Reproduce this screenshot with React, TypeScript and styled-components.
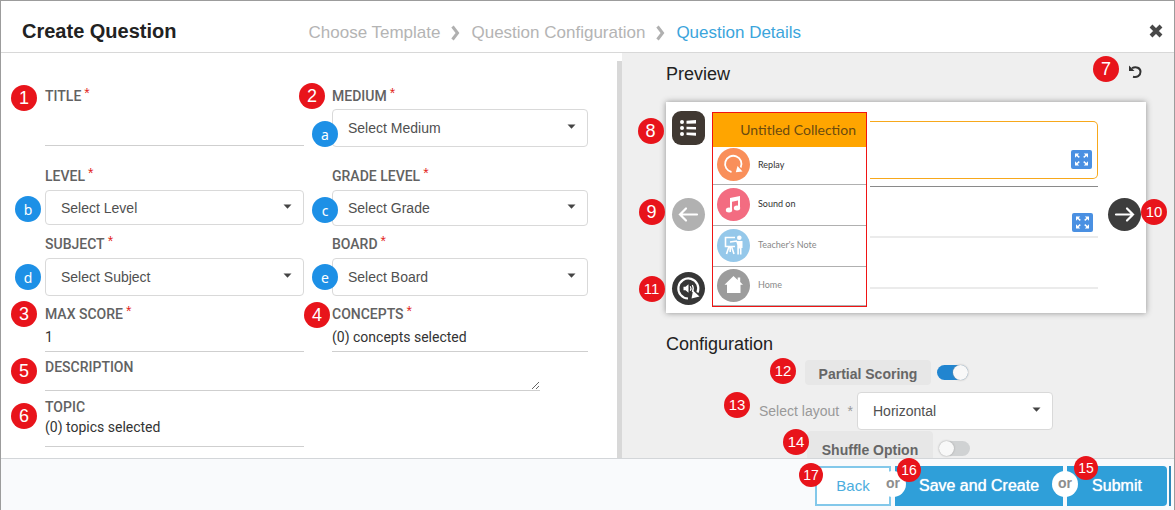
import React from "react";
import styled, { createGlobalStyle, css } from "styled-components";

const sans = `"Liberation Sans", Arial, sans-serif`;
const roboto = `Roboto, "Liberation Sans", sans-serif`;
const lato = `Lato, "Liberation Sans", sans-serif`;

const Global = createGlobalStyle`
  *, *::before, *::after { box-sizing: border-box; }
  body { margin: 0; font-family: ${sans}; background: #fff; }
  button, input, select, textarea { font: inherit; color: inherit; margin: 0; }
`;

/* ---------- shell ---------- */

const Frame = styled.div`
  height: 100vh;
  display: flex;
  flex-direction: column;
  border: 1px solid #9c9c9c;
  border-bottom: 0;
  overflow: hidden;
`;

const Header = styled.header`
  flex: none;
  display: flex;
  align-items: center;
  height: 52px;
  padding: 8px 11px 0 21px;
  border-bottom: 1px solid #d8d8d8;
`;

const Title = styled.h1`
  margin: 0;
  font-size: 20px;
  line-height: 24px;
  font-weight: 700;
  color: #222;
`;

const Crumbs = styled.ol`
  flex: 1;
  display: flex;
  align-items: center;
  margin: 0 0 0 132px;
  padding: 4px 0 0;
  list-style: none;
  font-size: 17px;
  line-height: 24px;
  color: #b4b4b4;
`;

const Crumb = styled.li<{ $active?: boolean }>`
  display: flex;
  align-items: center;
  white-space: nowrap;
  color: ${(p) => (p.$active ? "#3ba5dc" : "inherit")};
  svg { margin: 0 11px; }
`;

const IconButton = styled.button`
  display: flex;
  padding: 0;
  border: 0;
  background: none;
  color: #484848;
`;

const Body = styled.main`
  flex: 1;
  min-height: 0;
  display: grid;
  grid-template-columns: 621fr 552fr;
`;

/* ---------- callouts ---------- */

const Callout = styled.span<{ $x: number; $y: number; $kind?: "letter" | "wide" | "small" }>`
  position: absolute;
  z-index: 2;
  left: ${(p) => p.$x}px;
  top: ${(p) => p.$y}px;
  width: 26px;
  height: 26px;
  border-radius: 50%;
  background: #e8141b;
  color: #fff;
  font: 400 18px/26px ${sans};
  text-align: center;
  ${(p) => p.$kind === "letter" && css`
    background: #1d90e6;
    font: 400 14px/27px "Noto Sans", sans-serif;
  `}
  ${(p) => p.$kind === "wide" && css`font-size: 15px;`}
  ${(p) => p.$kind === "small" && css`
    width: 24px;
    height: 24px;
    font-size: 14px;
    line-height: 24px;
  `}
`;

/* ---------- form ---------- */

const FormPane = styled.form`
  min-height: 0;
  overflow: hidden;
  display: flex;
  padding-top: 8px;
`;

const Fields = styled.div`
  flex: 1;
  display: grid;
  align-content: start;
  grid-template-columns: minmax(0, 259fr) minmax(0, 256fr);
  column-gap: 28px;
  row-gap: 8px;
  padding: 25px 29px 0 44px;
`;

const ScrollTrack = styled.div`
  width: 5px;
  background: #d8d8d8;
`;

const Field = styled.div<{ $first?: boolean; $wide?: boolean; $tight?: boolean }>`
  position: relative;
  display: flex;
  flex-direction: column;
  gap: ${(p) => (p.$tight ? 0 : p.$first ? 3 : 4)}px;
  margin-bottom: ${(p) => (p.$first ? 11 : 0)}px;
  ${(p) => p.$wide && css`
    grid-column: 1 / -1;
    margin: -3px 48px -2px 0;
  `}
`;

const Label = styled.label`
  display: flex;
  gap: 3px;
  font: 500 14px/20px ${roboto};
  color: #626262;
  white-space: nowrap;
`;

const Star = styled.span`
  font: 400 14px/14px ${sans};
  color: #e2231a;
`;

const Control = styled.div`
  position: relative;
`;

const Select = styled.select<{ $height?: number }>`
  display: block;
  appearance: none;
  width: 100%;
  height: ${(p) => p.$height ?? 38}px;
  padding: 0 30px 0 15px;
  border: 1px solid #d9d9d9;
  border-radius: 4px;
  background: #fff;
  font: 400 14px/20px ${sans};
  color: #505050;
`;

const Caret = styled.svg`
  position: absolute;
  right: 12px;
  top: 50%;
  width: 9px;
  height: 5px;
  margin-top: -4px;
  pointer-events: none;
`;

const TextInput = styled.input<{ $height: number; $roomy?: boolean }>`
  display: block;
  width: 100%;
  height: ${(p) => p.$height}px;
  padding: 0 0 ${(p) => (p.$roomy ? 9 : 1)}px;
  border: 0;
  border-bottom: 1px solid #cfcfcf;
  border-radius: 0;
  background: none;
  outline: 0;
  font: 400 14px/20px ${roboto};
  color: #333;
`;

const TextArea = styled.textarea`
  display: block;
  width: 100%;
  height: 14px;
  padding: 0;
  border: 0;
  border-bottom: 1px solid #cfcfcf;
  background: none;
  outline: 0;
  resize: vertical;
  overflow: hidden;
`;

type SelectFieldProps = {
  id: string;
  label: string;
  option: string;
  height?: number;
  first?: boolean;
  letter: string;
  at: [number, number];
  children?: React.ReactNode;
};

const CaretIcon = () => (
  <Caret viewBox="0 0 9 5" aria-hidden="true">
    <path d="M0.5 0.5h8L4.5 4.7z" fill="#444" />
  </Caret>
);

function SelectField({ id, label, option, height, first, letter, at, children }: SelectFieldProps) {
  return (
    <Field $first={first}>
      {children}
      <Label htmlFor={id}>{label}<Star>*</Star></Label>
      <Control>
        <Select id={id} $height={height}><option>{option}</option></Select>
        <CaretIcon />
        <Callout $kind="letter" $x={at[0]} $y={at[1]}>{letter}</Callout>
      </Control>
    </Field>
  );
}

/* ---------- preview ---------- */

const SidePane = styled.section`
  min-height: 0;
  overflow: hidden;
  padding: 9px 28px 0 44px;
  background: #efefef;
`;

const PaneHead = styled.div`
  position: relative;
  display: flex;
  align-items: center;
  justify-content: space-between;
  height: 24px;
  padding-right: 4px;
`;

const PaneTitle = styled.h2`
  margin: 0;
  font-size: 18px;
  line-height: 24px;
  font-weight: 400;
  color: #222;
`;

const Player = styled.div`
  display: flex;
  height: 211px;
  margin: 16px 0 19px;
  padding: 9px 5px 6px 5px;
  background: #fff;
  box-shadow: 0 0 6px #8f8f8f;
`;

const Rail = styled.div`
  display: flex;
  flex-direction: column;
  align-items: center;
  gap: 41px;
  width: 34px;
`;

const Anchor = styled.div<{ $apart?: boolean }>`
  position: relative;
  margin-bottom: ${(p) => (p.$apart ? 12 : 0)}px;
`;

const Round = styled.button<{ $bg: string; $square?: boolean }>`
  display: flex;
  align-items: center;
  justify-content: center;
  width: 33px;
  height: ${(p) => (p.$square ? 34 : 33)}px;
  padding: 0;
  border: 0;
  border-radius: ${(p) => (p.$square ? "9px" : "50%")};
  background: ${(p) => p.$bg};
  color: #fff;
`;

const Menu = styled.div`
  flex: none;
  display: grid;
  grid-template-rows: 34px 38px 41px 41px 1fr;
  width: 155px;
  height: 195px;
  margin: 1px 3px 0 7px;
  border: 1px solid #f01414;
  font-family: ${lato};
`;

const MenuTitle = styled.div`
  padding-right: 10px;
  background: #ffa500;
  font-size: 14px;
  line-height: 34px;
  text-align: right;
  color: #6a4a10;
`;

const MenuItem = styled.button<{ $ink: string }>`
  display: flex;
  align-items: center;
  gap: 8px;
  padding: 0 0 2px 4px;
  border: 0;
  border-bottom: 1px solid #b0b0b0;
  background: none;
  font-size: 9px;
  line-height: 14px;
  color: ${(p) => p.$ink};
`;

const Stage = styled.div`
  flex: 1;
  margin-top: 10px;
`;

const Question = styled.div`
  display: flex;
  align-items: flex-end;
  justify-content: flex-end;
  height: 58px;
  padding: 0 5px 9px;
  border: 1px solid #f7a81b;
  border-left: 0;
  border-radius: 0 5px 5px 0;
`;

const Answer = styled.div<{ $height: number; $dark?: boolean }>`
  display: flex;
  align-items: flex-end;
  justify-content: flex-end;
  height: ${(p) => p.$height}px;
  padding: 0 5px 4px;
  border-bottom: ${(p) => (p.$dark ? "1px solid #8a8a8a" : "2px solid #ebebeb")};
`;

const Expand = styled.button`
  display: flex;
  width: 21px;
  height: 19px;
  padding: 0;
  align-items: center;
  justify-content: center;
  border: 0;
  border-radius: 2px;
  background: #4a90e2;
`;

const ExpandButton = () => (
  <Expand type="button" aria-label="Expand">
    <svg width="15" height="13" viewBox="0 0 15 13" fill="#fff" stroke="#fff" strokeWidth="1.500">
      <path stroke="none" d="M1 0.500h4.200L1 4.700zM14 0.500H9.800L14 4.700zM1 12.500h4.200L1 8.300zM14 12.500H9.800L14 8.300z" />
      <path d="M2.500 2l2.800 2.400M12.500 2l-2.800 2.400M2.500 11l2.800-2.400M12.500 11l-2.800-2.400" />
    </svg>
  </Expand>
);

const RightRail = styled.div`
  flex: none;
  width: 33px;
  margin: 87px 0 0 10px;
`;

/* ---------- configuration ---------- */

const ConfigRow = styled.div<{ $indent: number; $height: number }>`
  position: relative;
  display: flex;
  align-items: center;
  height: ${(p) => p.$height}px;
  padding-left: ${(p) => p.$indent}px;
`;

const Pill = styled.label<{ $tall?: boolean }>`
  width: 126px;
  height: ${(p) => (p.$tall ? 36 : 25)}px;
  margin-right: 6px;
  padding-top: ${(p) => (p.$tall ? 7 : 2)}px;
  border-radius: 4px;
  background: #e7e7e7;
  font-size: 14px;
  line-height: 24px;
  font-weight: 700;
  color: #666;
  text-align: center;
`;

const Switch = styled.input`
  appearance: none;
  display: flex;
  align-items: center;
  width: 31px;
  height: 15px;
  border-radius: 8px;
  background: #d0d2d3;
  &::before {
    content: "";
    width: 15px;
    height: 15px;
    border-radius: 50%;
    background: #f8f8f8;
    box-shadow: 0 0 2px #999;
  }
  &:checked { background: #2185d0; justify-content: flex-end; }
`;

const LayoutLabel = styled.label`
  display: flex;
  justify-content: space-between;
  width: 94px;
  margin-right: 4px;
  font-size: 14px;
  line-height: 20px;
  color: #999;
`;

const LayoutControl = styled(Control)`
  width: 196px;
`;

/* ---------- footer ---------- */

const Footer = styled.footer`
  flex: none;
  display: flex;
  justify-content: flex-end;
  height: 52px;
  padding: 7px 3px 4px 0;
  gap: 4px;
  border-top: 1px solid #d3d6d9;
  background: #f9fafc;
`;

const Action = styled.button<{ $width: number; $outline?: boolean; $last?: boolean }>`
  width: ${(p) => p.$width}px;
  height: 40px;
  padding: 0;
  border: 0;
  border-radius: ${(p) => (p.$last ? "0 4px 4px 0" : "0")};
  background: #2f9fd9;
  font-size: 16px;
  line-height: 20px;
  color: #fff;
  text-shadow: 0 0 1px #fff;
  ${(p) => p.$outline && css`
    border: 2px solid #83c8ea;
    background: #fff;
    font-size: 15px;
    color: #4badde;
    text-shadow: none;
  `}
`;

const Or = styled.span`
  position: absolute;
  z-index: 1;
  top: 5px;
  right: -15px;
  width: 26px;
  height: 26px;
  border-radius: 50%;
  background: #fff;
  font-size: 14px;
  line-height: 25px;
  font-weight: 700;
  text-align: center;
  color: #8d8d8d;
`;

const Edge = styled.div`
  width: 2px;
  margin-left: -2px;
  background: #2f86b8;
`;

/* ---------- icons ---------- */

const Chevron = () => (
  <svg width="9" height="16" viewBox="0 0 9 16" fill="none" stroke="#b0b0b0" strokeWidth="3" aria-hidden="true">
    <path d="M1.500 1.500L6.500 8l-5 6.500" />
  </svg>
);

const Disc = ({ fill, children }: { fill: string; children: React.ReactNode }) => (
  <svg width="33" height="33" viewBox="0 0 33 33" aria-hidden="true">
    <circle cx="16.500" cy="16.500" r="16.500" fill={fill} />
    {children}
  </svg>
);

const Arrow = ({ back }: { back?: boolean }) => (
  <svg width="21" height="17" viewBox="0 0 21 17" fill="none" stroke="#fff" strokeWidth="2.200" strokeLinecap="round">
    <path d={back ? "M19 8.500H2M8 2.500l-6 6 6 6" : "M2 8.500h17M13 2.500l6 6-6 6"} />
  </svg>
);

export default function App() {
  return (
    <>
      <Global />
      <Frame>
        <Header>
          <Title>Create Question</Title>
          <Crumbs>
            <Crumb>Choose Template<Chevron /></Crumb>
            <Crumb>Question Configuration<Chevron /></Crumb>
            <Crumb $active>Question Details</Crumb>
          </Crumbs>
          <IconButton type="button" aria-label="Close">
            <svg width="14" height="14" viewBox="0 0 14 14" stroke="currentColor" strokeWidth="4">
              <path d="M2 2l10 10M12 2L2 12" />
            </svg>
          </IconButton>
        </Header>

        <Body>
          <FormPane>
            <Fields>
              <Field $first>
                <Callout $x={-34} $y={-1}>1</Callout>
                <Label htmlFor="title">TITLE<Star>*</Star></Label>
                <TextInput id="title" $height={37} />
              </Field>
              <SelectField id="medium" label="MEDIUM" option="Select Medium" first letter="a" at={[-20, 12]}>
                <Callout $x={-33} $y={-3}>2</Callout>
              </SelectField>
              <SelectField id="level" label="LEVEL" option="Select Level" height={35} letter="b" at={[-30, 6]} />
              <SelectField id="grade" label="GRADE LEVEL" option="Select Grade" height={36} letter="c" at={[-20, 7]} />
              <SelectField id="subject" label="SUBJECT" option="Select Subject" letter="d" at={[-30, 6]} />
              <SelectField id="board" label="BOARD" option="Select Board" letter="e" at={[-20, 6]} />
              <Field $tight>
                <Callout $x={-34} $y={-3}>3</Callout>
                <Label htmlFor="score">MAX SCORE<Star>*</Star></Label>
                <TextInput id="score" $height={28} defaultValue="1" />
              </Field>
              <Field $tight>
                <Callout $x={-28} $y={-2}>4</Callout>
                <Label htmlFor="concepts">CONCEPTS<Star>*</Star></Label>
                <TextInput id="concepts" $height={28} readOnly value="(0) concepts selected" />
              </Field>
              <Field $wide $tight>
                <Callout $x={-34} $y={1}>5</Callout>
                <Label htmlFor="description">DESCRIPTION</Label>
                <TextArea id="description" />
              </Field>
              <Field $tight>
                <Callout $x={-34} $y={6}>6</Callout>
                <Label htmlFor="topic">TOPIC</Label>
                <TextInput id="topic" $height={30} $roomy readOnly value="(0) topics selected" />
              </Field>
            </Fields>
            <ScrollTrack />
          </FormPane>

          <SidePane>
            <PaneHead>
              <PaneTitle>Preview</PaneTitle>
              <Callout $x={427} $y={-6}>7</Callout>
              <IconButton type="button" aria-label="Reload preview">
                <svg width="14" height="18" viewBox="0 0 14 18" fill="none" stroke="#333" strokeWidth="2">
                  <path d="M4 3.200c4-2.200 8.500-.2 8.500 3.600 0 3.700-3.500 6-7.500 4.900" />
                  <path d="M1 0.500v5.500h5.500z" fill="#333" stroke="none" />
                </svg>
              </IconButton>
            </PaneHead>

            <Player>
              <Rail>
                <Anchor $apart>
                  <Round type="button" $bg="#403832" $square aria-label="Menu">
                    <svg width="19" height="18" viewBox="0 0 19 18" fill="#fff">
                      <circle cx="3" cy="3" r="2" /><circle cx="3" cy="9" r="2" /><circle cx="3" cy="15" r="2" />
                      <path d="M7.500 1.800l9.500-.8v3.500l-9.500.2zM7.500 7.800l9.500.2v2.500l-9.500-.2zM7.500 13.500l9.500.2v3l-9.500-.8z" />
                    </svg>
                  </Round>
                  <Callout $x={-34} $y={7}>8</Callout>
                </Anchor>
                <Anchor>
                  <Round type="button" $bg="#b1b1b1" aria-label="Previous"><Arrow back /></Round>
                  <Callout $x={-33} $y={1}>9</Callout>
                </Anchor>
                <Anchor>
                  <Round type="button" $bg="#363636" aria-label="Replay audio">
                    <svg width="33" height="33" viewBox="0 0 33 33" fill="none" stroke="#fff" strokeWidth="2.200">
                      <path d="M16 26.500A10 10 0 1 1 25.500 20.500" />
                      <path d="M19.500 26.500l8-2-6.500-6z" fill="#fff" stroke="none" />
                      <path d="M11.500 14.800h2l3-2.500v8.500l-3-2.500h-2z" fill="#fff" stroke="none" />
                      <path d="M18.300 14.300q1.400 2.200 0 4.500M20.300 13q2 3.500 0 7" strokeWidth="1.200" />
                    </svg>
                  </Round>
                  <Callout $kind="wide" $x={-33} $y={4}>11</Callout>
                </Anchor>
              </Rail>

              <Menu>
                <MenuTitle>Untitled Collection</MenuTitle>
                <MenuItem type="button" $ink="#333">
                  <Disc fill="#f98f5a">
                    <path d="M14.500 24A8.200 8.200 0 1 1 23.700 19.500" fill="none" stroke="#fff" strokeWidth="1.800" />
                    <path d="M18.800 24.300l6.700-.8-5-5.500z" fill="#fff" />
                  </Disc>
                  Replay
                </MenuItem>
                <MenuItem type="button" $ink="#333">
                  <Disc fill="#f36c81">
                    <path d="M13 10l10-2v12h-2v-7.500l-6 1.200v7.800h-2z" fill="#fff" />
                    <ellipse cx="12" cy="22" rx="3.200" ry="2.500" fill="#fff" />
                    <ellipse cx="20" cy="20" rx="3.200" ry="2.500" fill="#fff" />
                  </Disc>
                  Sound on
                </MenuItem>
                <MenuItem type="button" $ink="#888">
                  <Disc fill="#95c8ea">
                    <path d="M18 8.500H8.500v9H18M12 17.500L9.500 25M14.500 17.500L17 25M13.200 17.500V23M13 13l7-1" fill="none" stroke="#fff" strokeWidth="1.600" />
                    <circle cx="22.300" cy="8.700" r="2.300" fill="#fff" />
                    <path d="M19 12h6.500v7h-1v6.500h-1.600v-6h-1v6h-1.600V16z" fill="#fff" />
                  </Disc>
                  Teacher's Note
                </MenuItem>
                <MenuItem type="button" $ink="#888">
                  <Disc fill="#9c9c9c">
                    <path d="M16.500 7L7.500 15.800H10V24h13.500v-8.200h2.500l-2.800-2.700V8.500h-2.500v2.500z" fill="#fff" />
                  </Disc>
                  Home
                </MenuItem>
              </Menu>

              <Stage>
                <Question><ExpandButton /></Question>
                <Answer $height={8} $dark />
                <Answer $height={51}><ExpandButton /></Answer>
                <Answer $height={51} />
              </Stage>

              <RightRail>
                <Anchor>
                  <Round type="button" $bg="#3d3d3d" aria-label="Next"><Arrow /></Round>
                  <Callout $kind="wide" $x={33} $y={1}>10</Callout>
                </Anchor>
              </RightRail>
            </Player>

            <PaneTitle>Configuration</PaneTitle>
            <ConfigRow $indent={139} $height={33}>
              <Callout $kind="wide" $x={104} $y={2}>12</Callout>
              <Pill htmlFor="partial">Partial Scoring</Pill>
              <Switch id="partial" type="checkbox" role="switch" defaultChecked />
            </ConfigRow>
            <ConfigRow $indent={93} $height={44}>
              <Callout $kind="wide" $x={58} $y={3}>13</Callout>
              <LayoutLabel htmlFor="layout"><span>Select layout</span><span>*</span></LayoutLabel>
              <LayoutControl>
                <Select id="layout"><option>Horizontal</option></Select>
                <CaretIcon />
              </LayoutControl>
            </ConfigRow>
            <ConfigRow $indent={141} $height={31}>
              <Callout $kind="wide" $x={117} $y={-4}>14</Callout>
              <Pill htmlFor="shuffle" $tall>Shuffle Option</Pill>
              <Switch id="shuffle" type="checkbox" role="switch" />
            </ConfigRow>
          </SidePane>
        </Body>

        <Footer>
          <Anchor>
            <Callout $kind="small" $x={-16} $y={-3}>17</Callout>
            <Action type="button" $width={76} $outline>Back</Action>
            <Or>or</Or>
          </Anchor>
          <Anchor>
            <Callout $kind="small" $x={2} $y={-8}>16</Callout>
            <Action type="button" $width={168}>Save and Create</Action>
            <Or>or</Or>
          </Anchor>
          <Anchor>
            <Callout $kind="small" $x={7} $y={-10}>15</Callout>
            <Action type="submit" $width={100} $last>Submit</Action>
          </Anchor>
          <Edge />
        </Footer>
      </Frame>
    </>
  );
}
